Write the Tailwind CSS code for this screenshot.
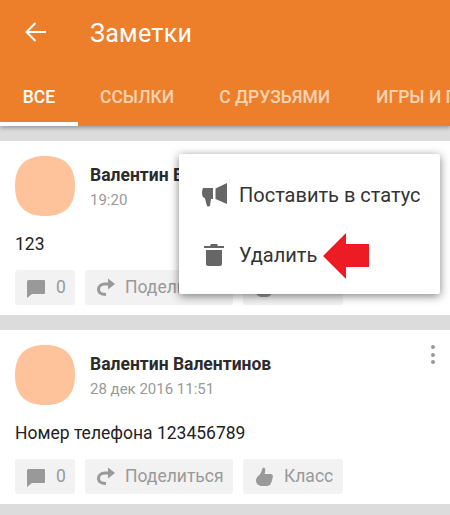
<!DOCTYPE html>
<html lang="en">
  <head>
    <meta charset="UTF-8" />
    <title>Заметки</title>
    <script src="https://cdn.jsdelivr.net/npm/@tailwindcss/browser@4"></script>
  </head>
  <body class="relative w-[450px] h-[515px] overflow-hidden bg-[#dcdcdc] font-['Roboto','Liberation_Sans',sans-serif]">
    <!-- Toolbar with tabs -->
    <header class="relative h-[126px] bg-[#ed7f2b] shadow-[0_2px_4px_rgba(0,0,0,0.3)]">
      <div class="flex items-center h-[66px]">
        <svg class="ml-[25px] mt-[-2px] w-[21px] h-[20px] shrink-0" viewBox="0 0 21 20" fill="none" stroke="#fff" stroke-width="2">
          <path d="M21 10H2M10.500 1L1.500 10l9 9" />
        </svg>
        <span class="ml-[44px] text-[25px] leading-none text-white tracking-[0.3px]">Заметки</span>
      </div>
      <nav class="flex h-[60px] text-[17.500px] font-medium whitespace-nowrap overflow-hidden text-[#fbd3b3]">
        <div class="w-[78px] shrink-0 h-full border-b-[4px] border-white text-white text-center leading-[62px]">ВСЕ</div>
        <div class="ml-[22px] shrink-0 leading-[62px]">ССЫЛКИ</div>
        <div class="ml-[45px] shrink-0 leading-[62px]">С ДРУЗЬЯМИ</div>
        <div class="ml-[46px] shrink-0 leading-[62px]">ИГРЫ И ПРИЛОЖЕНИЯ</div>
      </nav>
    </header>

    <!-- First note -->
    <article class="mt-[15px] h-[174px] bg-white px-[15px] pt-[15px]">
      <div class="flex">
        <svg class="w-[60px] h-[60px] shrink-0" viewBox="0 0 60 60"><path fill="#ffc39b" d="M30 0C50 0 60 10 60 30S50 60 30 60 0 50 0 30 10 0 30 0Z" /></svg>
        <div class="ml-[15px] pt-[9px]">
          <p class="text-[17.500px] leading-[20px] font-bold text-[#2b2b2b] whitespace-nowrap">Валентин Валентинов</p>
          <p class="mt-[5px] text-[15px] leading-[20px] text-[#999]">19:20</p>
        </div>
      </div>
      <p class="mt-[18px] h-[20px] text-[17.500px] leading-[20px] text-[#222]">123</p>
      <div class="flex gap-[10px] mt-[16px]">
        <div class="flex items-center w-[60px] h-[35px] rounded-[3px] bg-[#f2f2f2] pl-[12px] text-[17.500px] text-[#999]">
          <svg class="w-[18px] h-[21px] shrink-0" viewBox="0 0 18 21"><path fill="#999" d="M1.500 3H17a1 1 0 0 1 1 1v12a1 1 0 0 1-1 1H5L0 21V4.500A1.500 1.500 0 0 1 1.500 3Z" /></svg>
          <span class="ml-[11px]">0</span>
        </div>
        <div class="flex items-center w-[148px] h-[35px] rounded-[3px] bg-[#f2f2f2] pl-[12px] text-[17.500px] text-[#999]">
          <svg class="w-[18px] h-[20px] shrink-0" viewBox="0 0 18 20" fill="none"><path stroke="#999" stroke-width="3" d="M9 16.500C4 16.500 1.500 14.500 1.500 11.500S4 6 8 6h5" /><path fill="#999" d="M11 0.500L18 6l-7 5.500Z" /></svg>
          <span class="ml-[10px]">Поделиться</span>
        </div>
        <div class="flex items-center w-[100px] h-[35px] rounded-[3px] bg-[#f2f2f2] pl-[13px] text-[17.500px] text-[#999]">
          <svg class="w-[17px] h-[20px] shrink-0" viewBox="0 0 17 20"><path fill="#999" d="M7.500 0.500c1.300 0 1.800 1.200 1.800 2.700 0 1.300-.5 2.500-.7 3.800h6c1.600 0 2.600 1.300 2.200 3-.6 2.800-1.200 5.500-2.400 7.300-.8 1.200-1.900 1.700-3.400 1.700H6C2.500 19 0 16.500 0 13.500 0 10.500 2 9 3.800 7.500 5.500 6 6 0.500 7.500 0.500Z" /></svg>
          <span class="ml-[11px]">Класс</span>
        </div>
      </div>
    </article>

    <!-- Second note -->
    <article class="relative mt-[15px] h-[174px] bg-white px-[15px] pt-[15px]">
      <div class="flex">
        <svg class="w-[60px] h-[60px] shrink-0" viewBox="0 0 60 60"><path fill="#ffc39b" d="M30 0C50 0 60 10 60 30S50 60 30 60 0 50 0 30 10 0 30 0Z" /></svg>
        <div class="ml-[15px] pt-[9px]">
          <p class="text-[17.500px] leading-[20px] font-bold text-[#2b2b2b] whitespace-nowrap">Валентин Валентинов</p>
          <p class="mt-[5px] text-[15px] leading-[20px] text-[#999]">28 дек 2016 11:51</p>
        </div>
      </div>
      <p class="mt-[18px] h-[20px] text-[17.500px] leading-[20px] text-[#222]">Номер телефона 123456789</p>
      <div class="flex gap-[10px] mt-[16px]">
        <div class="flex items-center w-[60px] h-[35px] rounded-[3px] bg-[#f2f2f2] pl-[12px] text-[17.500px] text-[#999]">
          <svg class="w-[18px] h-[21px] shrink-0" viewBox="0 0 18 21"><path fill="#999" d="M1.500 3H17a1 1 0 0 1 1 1v12a1 1 0 0 1-1 1H5L0 21V4.500A1.500 1.500 0 0 1 1.500 3Z" /></svg>
          <span class="ml-[11px]">0</span>
        </div>
        <div class="flex items-center w-[148px] h-[35px] rounded-[3px] bg-[#f2f2f2] pl-[12px] text-[17.500px] text-[#999]">
          <svg class="w-[18px] h-[20px] shrink-0" viewBox="0 0 18 20" fill="none"><path stroke="#999" stroke-width="3" d="M9 16.500C4 16.500 1.500 14.500 1.500 11.500S4 6 8 6h5" /><path fill="#999" d="M11 0.500L18 6l-7 5.500Z" /></svg>
          <span class="ml-[10px]">Поделиться</span>
        </div>
        <div class="flex items-center w-[100px] h-[35px] rounded-[3px] bg-[#f2f2f2] pl-[13px] text-[17.500px] text-[#999]">
          <svg class="w-[17px] h-[20px] shrink-0" viewBox="0 0 17 20"><path fill="#999" d="M7.500 0.500c1.300 0 1.800 1.200 1.800 2.700 0 1.300-.5 2.500-.7 3.800h6c1.600 0 2.600 1.300 2.200 3-.6 2.800-1.200 5.500-2.400 7.300-.8 1.200-1.900 1.700-3.400 1.700H6C2.500 19 0 16.500 0 13.500 0 10.500 2 9 3.800 7.500 5.500 6 6 0.500 7.500 0.500Z" /></svg>
          <span class="ml-[11px]">Класс</span>
        </div>
      </div>
      <!-- Overflow dots -->
      <div class="absolute right-[15px] top-[15px] flex flex-col gap-[3.500px]">
        <span class="w-[4px] h-[4px] rounded-full bg-[#999]"></span>
        <span class="w-[4px] h-[4px] rounded-full bg-[#999]"></span>
        <span class="w-[4px] h-[4px] rounded-full bg-[#999]"></span>
      </div>
    </article>

    <!-- Popup menu -->
    <div class="absolute left-[179px] top-[154px] w-[261px] h-[140px] py-[11px] rounded-[2px] bg-white shadow-[0_2px_10px_rgba(0,0,0,0.5)] text-[20px] text-[#333]">
      <div class="flex items-center h-[60px] pl-[23px]">
        <svg class="w-[25px] h-[24px] shrink-0" viewBox="0 0 25 24"><path fill="#666" d="M1 5h10v11H9l-1 6.500c-.2 1.200-2.800 1.200-3.200-.1L3 15.500C1 14.500 0 12.500 0 10.500 0 8 .4 6.500 1 5ZM13.500 5.500L25 0v21l-11.500-5Z" /></svg>
        <span class="ml-[12px]">Поставить в статус</span>
      </div>
      <div class="flex items-center h-[60px] pl-[25px]">
        <svg class="w-[20px] h-[24px] shrink-0" viewBox="0 0 20 24"><path fill="#666" d="M0 3h6l1-2h6l1 2h6v2H0ZM2 7h16v14a2 2 0 0 1-2 2H4a2 2 0 0 1-2-2Z" /></svg>
        <span class="ml-[15px]">Удалить</span>
      </div>
    </div>

    <!-- Red annotation arrow -->
    <svg class="absolute left-[323px] top-[233px] w-[46px] h-[46px]" viewBox="0 0 46 46"><path fill="#ed1c24" d="M0 23L23 0v11h23v23H23v12Z" /></svg>
  </body>
</html>
